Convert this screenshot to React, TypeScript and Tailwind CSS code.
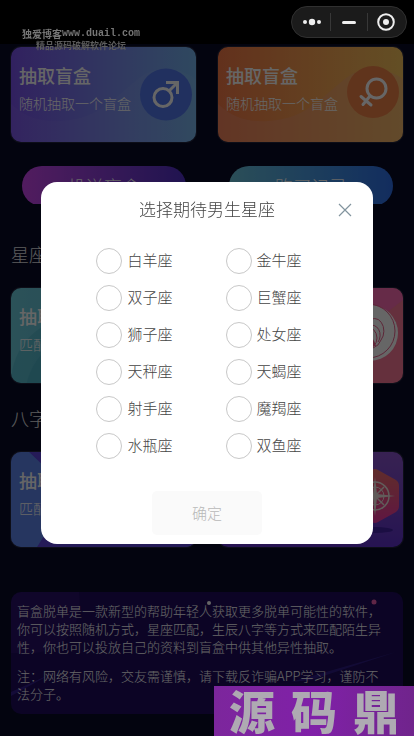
import React, { useState } from 'react';

type BlindCardProps = {
  title: string;
  desc: string;
  className: string;
  art: React.ReactNode;
};

const signs = [
  '白羊座',
  '金牛座',
  '双子座',
  '巨蟹座',
  '狮子座',
  '处女座',
  '天秤座',
  '天蝎座',
  '射手座',
  '魔羯座',
  '水瓶座',
  '双鱼座',
];

const BlindCard: React.FC<BlindCardProps> = ({ title, desc, className, art }) => {
  return (
    <a
      href="#draw"
      className={`relative block h-[95px] overflow-hidden rounded-[10px] text-white ring-1 ring-white/10 ${className}`}
    >
      <svg
        className="absolute inset-0 h-full w-full"
        viewBox="0 0 185 95"
        preserveAspectRatio="xMaxYMid slice"
        aria-hidden="true"
      >
        {art}
      </svg>
      <div className="relative px-2 pt-4">
        <h3 className="text-lg leading-6 font-medium">{title}</h3>
        <p className="mt-1 text-sm leading-6 font-light">{desc}</p>
      </div>
    </a>
  );
};

const wave = 'M0 57C16 72 32 75 50 74C92 72 108 44 134 27C150 18 170 21 185 32V95H0Z';

const MaleArt = () => (
  <>
    <path d={wave} fill="#fff" opacity="0.04" />
    <circle cx="155" cy="47.500" r="26" fill="#5378ee" />
    <g fill="none" stroke="#fff" strokeWidth="3">
      <circle cx="152" cy="50.500" r="9" />
      <path d="M158 44L167 35M155 35.500H166.500V47" />
    </g>
  </>
);

const FemaleArt = () => (
  <>
    <path d={wave} fill="#f0a090" opacity="0.3" />
    <circle cx="155" cy="45" r="26" fill="#f08248" />
    <g fill="none" stroke="#fff" strokeWidth="3">
      <circle cx="158.500" cy="41.500" r="9.500" />
      <path d="M152 49L145 57.500M143 49.500L153 58" strokeLinecap="round" />
    </g>
  </>
);

const BubbleArt = () => (
  <>
    <circle cx="66" cy="95" r="66" fill="#3ba5bd" opacity="0.35" />
    <circle cx="80" cy="110" r="66" fill="#3ba5bd" opacity="0.35" />
  </>
);

const ShellArt = () => (
  <>
    <path d="M0 0H185V12L110 70L0 95Z" fill="#ff60d0" opacity="0.5" />
    <circle cx="152" cy="45" r="28" fill="#fff" />
    <g fill="none" stroke="#e8608c" strokeWidth="1">
      <circle cx="150" cy="43" r="27" />
      <path d="M150 34A9 12 0 0 1 163 52A13 13 0 0 1 155 60" />
      <path d="M151 38A8 10 0 0 1 160 54" />
      <circle cx="147" cy="50" r="12" />
    </g>
    <path d="M146 58V49Q154 44 158 58Z" fill="#e8608c" />
  </>
);

const FacetArt = () => (
  <>
    <path d="M18 0H185V95H26L60 40Z" fill="#5b38d8" opacity="0.85" />
    <path d="M18 0L60 40L26 95H0V0Z" fill="#5b85f0" opacity="0.5" />
  </>
);

const CompassArt = () => (
  <>
    <defs>
      <linearGradient id="hex" x1="0" y1="0" x2="0" y2="1">
        <stop offset="0" stopColor="#f0706c" />
        <stop offset="1" stopColor="#f038a4" />
      </linearGradient>
    </defs>
    <ellipse cx="157" cy="78" rx="18" ry="3" fill="#4424a8" />
    <path
      d="M154 18Q157 16 160 18L178 28Q181 30 181 34V54Q181 58 178 60L160 70Q157 72 154 70L133 60Q130 58 130 54V34Q130 30 133 28Z"
      fill="url(#hex)"
    />
    <g fill="none" stroke="#f2e6e2">
      <circle cx="157" cy="44" r="14" strokeWidth="1.500" />
      <circle cx="157" cy="44" r="9" strokeWidth="1" />
      <path d="M148 35L166 53M166 35L148 53" strokeWidth="1.500" />
    </g>
    <path d="M157 25L159 42L177 44L159 46L157 64L155 46L137 44L155 42Z" fill="#f2e6e2" />
  </>
);

const SectionTitle = ({ children }: { children: React.ReactNode }) => (
  <h2 className="mb-5 text-lg leading-7 font-light text-[#e6e6e6]">{children}</h2>
);

const App: React.FC = () => {
  const [open, setOpen] = useState(true);
  const [sign, setSign] = useState('');

  return (
    <div className="relative min-h-screen bg-[#080a26] font-['Noto_Sans_CJK_SC',sans-serif]">
      <header className="h-11 bg-black" />

      <main className="px-[11px] pt-[3px] pb-[22px]">
        <div className="grid grid-cols-2 gap-[22px]">
          <BlindCard
            title="抽取盲盒"
            desc="随机抽取一个盲盒"
            className="bg-linear-to-r from-[#7c52ee] to-[#75b4ee]"
            art={<MaleArt />}
          />
          <BlindCard
            title="抽取盲盒"
            desc="随机抽取一个盲盒"
            className="bg-linear-to-r from-[#f67a48] to-[#f8c45c]"
            art={<FemaleArt />}
          />
        </div>

        {/* Put in / history */}
        <div className="mt-6 grid grid-cols-2 gap-[22px]">
          <div className="h-[38px] overflow-hidden pr-2.5 pl-[11px]">
            <button
              type="button"
              className="h-10 w-full rounded-full bg-linear-to-r from-[#cc46ee] to-[#5030c8] text-lg font-light text-white"
            >
              投送盲盒
            </button>
          </div>
          <div className="h-[38px] overflow-hidden pr-2.5 pl-[11px]">
            <button
              type="button"
              className="h-10 w-full rounded-full bg-linear-to-r from-[#6cc4dc] to-[#3070ec] text-lg font-light text-white"
            >
              购买记录
            </button>
          </div>
        </div>

        <section className="mt-9">
          <SectionTitle>星座匹配</SectionTitle>
          <div className="grid grid-cols-2 gap-[22px]">
            <BlindCard
              title="抽取男生"
              desc="匹配星座"
              className="bg-linear-to-r from-[#6cccdc] to-[#58b0d0]"
              art={<BubbleArt />}
            />
            <BlindCard
              title="抽取女生"
              desc="匹配星座"
              className="bg-[#fc7898]"
              art={<ShellArt />}
            />
          </div>
        </section>

        <section className="mt-[21px]">
          <SectionTitle>八字匹配</SectionTitle>
          <div className="grid grid-cols-2 gap-[22px]">
            <BlindCard
              title="抽取男生"
              desc="匹配八字"
              className="bg-[#6488f0]"
              art={<FacetArt />}
            />
            <BlindCard
              title="抽取女生"
              desc="匹配八字"
              className="bg-linear-to-b from-[#8c54cc] to-[#6032cc]"
              art={<CompassArt />}
            />
          </div>
        </section>

        {/* Notice */}
        <section className="relative mt-[45px] overflow-hidden rounded-[10px] bg-[#1e0c5c] pt-2.5 pr-3 pb-[11px] pl-1.5 text-[13px] leading-[18px] font-light text-white">
          <svg
            className="absolute inset-0 h-full w-full"
            viewBox="0 0 392 122"
            preserveAspectRatio="none"
            aria-hidden="true"
          >
            <path d="M0 0H68C72 30 56 61 20 61H0Z" fill="#5020a0" opacity="0.2" />
            <path d="M0 100L40 82L0 104Z" fill="#5038d8" opacity="0.4" />
            <path d="M280 90L385 60L300 88Z" fill="#5038d8" opacity="0.35" />
            <circle cx="198" cy="11" r="2" fill="#fff" />
            <circle cx="363" cy="10" r="2.500" fill="#f060b0" />
          </svg>
          <p className="relative">
            盲盒脱单是一款新型的帮助年轻人获取更多脱单可能性的软件，你可以按照随机方式，星座匹配，生辰八字等方式来匹配陌生异性，你也可以投放自己的资料到盲盒中供其他异性抽取。
          </p>
          <p className="relative mt-[11px]">
            注：网络有风险，交友需谨慎，请下载反诈骗APP学习，谨防不法分子。
          </p>
        </section>
      </main>

      {/* Sign picker */}
      {open && (
        <div className="fixed inset-0 flex items-start justify-center bg-black/60 pt-[182px]">
          <div
            role="dialog"
            aria-modal="true"
            aria-labelledby="picker-title"
            className="w-4/5 rounded-2xl bg-white pb-[9px] font-light text-[#444]"
          >
            <div className="relative flex h-[54px] items-center justify-center">
              <h2 id="picker-title" className="text-[17px]">
                选择期待男生星座
              </h2>
              <button
                type="button"
                aria-label="关闭"
                onClick={() => setOpen(false)}
                className="absolute top-4 right-4 flex size-6 items-center justify-center"
              >
                <svg viewBox="0 0 12 12" className="size-3 overflow-visible" aria-hidden="true">
                  <path d="M0 0L12 12M12 0L0 12" stroke="#82949e" strokeWidth="1.200" />
                </svg>
              </button>
            </div>
            <div className="grid grid-cols-2 pt-1.5 pr-[18px] pl-[55px]">
              {signs.map((name) => (
                <label key={name} className="flex h-[37px] items-center gap-[5px] text-[15px]">
                  <input
                    type="radio"
                    name="sign"
                    value={name}
                    checked={sign === name}
                    onChange={() => setSign(name)}
                    className="size-[26px] appearance-none rounded-full border border-[#c8c8c8] checked:border-8 checked:border-[#09bb07]"
                  />
                  {name}
                </label>
              ))}
            </div>
            <button
              type="button"
              disabled={!sign}
              onClick={() => setOpen(false)}
              className="mx-auto mt-[27px] block h-11 w-[110px] rounded-[5px] bg-[#09bb07] text-[15px] text-white disabled:bg-[#fafafa] disabled:text-[#b8b8b8]"
            >
              确定
            </button>
          </div>
        </div>
      )}

      {/* Watermark */}
      <div className="pointer-events-none absolute top-7 left-[22px] flex flex-col items-center text-[10px] leading-3 font-bold text-[#767676]">
        <p className="flex items-center">
          独爱博客
          <span className="font-['Liberation_Mono',monospace]">www.duail.com</span>
        </p>
        <p className="text-[9px] text-[#5c5c5c]">精品源码破解软件论坛</p>
      </div>

      {/* Capsule */}
      <div className="fixed top-1.5 right-[7px] flex h-8 w-[116px] items-center divide-x divide-[#383838] rounded-full border border-[#303030] bg-[#1b1b1b] px-0.5 text-[#eee]">
        <button type="button" aria-label="更多" className="flex h-[18px] flex-1 items-center justify-center">
          <svg width="20" height="8" viewBox="0 0 20 8" fill="currentColor" aria-hidden="true">
            <circle cx="3" cy="4" r="2" />
            <circle cx="10" cy="4" r="3.200" />
            <circle cx="17" cy="4" r="2" />
          </svg>
        </button>
        <button type="button" aria-label="最小化" className="flex h-[18px] flex-1 items-center justify-center">
          <span className="h-[3px] w-3.5 rounded-full bg-current" />
        </button>
        <button type="button" aria-label="退出" className="flex h-[18px] flex-1 items-center justify-center">
          <svg width="18" height="18" viewBox="0 0 18 18" aria-hidden="true">
            <circle cx="9" cy="9" r="7.800" fill="none" stroke="currentColor" strokeWidth="2" />
            <circle cx="9" cy="9" r="3" fill="currentColor" />
          </svg>
        </button>
      </div>

      {/* Corner stamp */}
      <div className="pointer-events-none fixed right-0 bottom-0 flex h-[50px] w-[200px] items-start justify-center gap-4 bg-linear-to-r from-[#7c269c] via-[#8020a8] to-[#70248c] text-[46px] leading-[46px] font-black text-[#aeaab2]">
        <span>源</span>
        <span>码</span>
        <span>鼎</span>
      </div>
    </div>
  );
};

export default App;
